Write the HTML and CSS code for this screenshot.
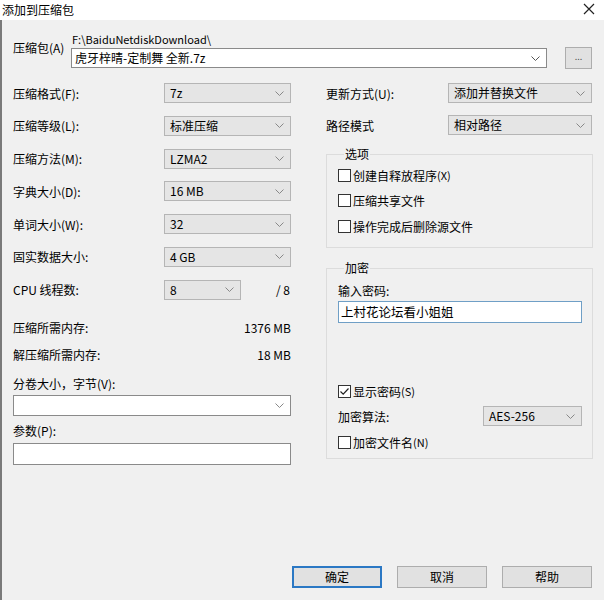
FILE: index.html
```html
<!DOCTYPE html>
<html lang="zh-CN">
<head>
<meta charset="utf-8">
<title>添加到压缩包</title>
<link rel="stylesheet" href="styles.css">
</head>
<body>
<div class="window">
  <div class="titlebar">
    <span class="title">添加到压缩包</span>
    <svg class="close" width="12" height="12" viewBox="0 0 12 12"><path d="M1 1L11 11M11 1L1 11" stroke="#222" stroke-width="1.2" fill="none"/></svg>
  </div>
  <div class="content">
    <div class="archive">
      <div class="archive-label">压缩包(A)</div>
      <div class="archive-main">
        <div class="path">F:\BaiduNetdiskDownload\</div>
        <div class="combo edit wide"><span>虎牙梓晴-定制舞 全新.7z</span><svg class="chev" width="9" height="5" viewBox="0 0 9 5"><path d="M0.5 0.5L4.5 4.5L8.5 0.5" stroke="#555" fill="none"/></svg></div>
      </div>
      <div class="browse">...</div>
    </div>

    <div class="columns">
      <div class="left">
        <div class="settings">
          <div class="lbl">压缩格式(F):</div>
          <div class="combo sel"><span>7z</span><svg class="chev" width="9" height="5" viewBox="0 0 9 5"><path d="M0.5 0.5L4.5 4.5L8.5 0.5" stroke="#888" fill="none"/></svg></div>
          <div class="lbl">压缩等级(L):</div>
          <div class="combo sel"><span>标准压缩</span><svg class="chev" width="9" height="5" viewBox="0 0 9 5"><path d="M0.5 0.5L4.5 4.5L8.5 0.5" stroke="#888" fill="none"/></svg></div>
          <div class="lbl">压缩方法(M):</div>
          <div class="combo sel"><span>LZMA2</span><svg class="chev" width="9" height="5" viewBox="0 0 9 5"><path d="M0.5 0.5L4.5 4.5L8.5 0.5" stroke="#888" fill="none"/></svg></div>
          <div class="lbl">字典大小(D):</div>
          <div class="combo sel"><span>16 MB</span><svg class="chev" width="9" height="5" viewBox="0 0 9 5"><path d="M0.5 0.5L4.5 4.5L8.5 0.5" stroke="#888" fill="none"/></svg></div>
          <div class="lbl">单词大小(W):</div>
          <div class="combo sel"><span>32</span><svg class="chev" width="9" height="5" viewBox="0 0 9 5"><path d="M0.5 0.5L4.5 4.5L8.5 0.5" stroke="#888" fill="none"/></svg></div>
          <div class="lbl">固实数据大小:</div>
          <div class="combo sel"><span>4 GB</span><svg class="chev" width="9" height="5" viewBox="0 0 9 5"><path d="M0.5 0.5L4.5 4.5L8.5 0.5" stroke="#888" fill="none"/></svg></div>
          <div class="lbl">CPU 线程数:</div>
          <div class="cpu">
            <div class="combo sel short"><span>8</span><svg class="chev" width="9" height="5" viewBox="0 0 9 5"><path d="M0.5 0.5L4.5 4.5L8.5 0.5" stroke="#888" fill="none"/></svg></div>
            <span class="of">/ 8</span>
          </div>
        </div>
        <div class="mem first"><span>压缩所需内存:</span><span>1376 MB</span></div>
        <div class="mem second"><span>解压缩所需内存:</span><span>18 MB</span></div>
        <div class="field-label vol">分卷大小，字节(V):</div>
        <div class="combo edit full"><span></span><svg class="chev" width="9" height="5" viewBox="0 0 9 5"><path d="M0.5 0.5L4.5 4.5L8.5 0.5" stroke="#888" fill="none"/></svg></div>
        <div class="field-label par">参数(P):</div>
        <div class="textbox"></div>
      </div>

      <div class="right">
        <div class="settings right-settings">
          <div class="lbl">更新方式(U):</div>
          <div class="combo sel"><span>添加并替换文件</span><svg class="chev" width="9" height="5" viewBox="0 0 9 5"><path d="M0.5 0.5L4.5 4.5L8.5 0.5" stroke="#888" fill="none"/></svg></div>
          <div class="lbl">路径模式</div>
          <div class="combo sel"><span>相对路径</span><svg class="chev" width="9" height="5" viewBox="0 0 9 5"><path d="M0.5 0.5L4.5 4.5L8.5 0.5" stroke="#888" fill="none"/></svg></div>
        </div>
        <fieldset class="group options">
          <legend>选项</legend>
          <label class="check"><span class="box"></span>创建自释放程序<small>(X)</small></label>
          <label class="check"><span class="box"></span>压缩共享文件</label>
          <label class="check"><span class="box"></span>操作完成后删除源文件</label>
        </fieldset>
        <fieldset class="group crypt">
          <legend>加密</legend>
          <div class="pw-label">输入密码:</div>
          <div class="pw">上村花论坛看小姐姐</div>
          <label class="check show"><span class="box"><svg width="11" height="11" viewBox="0 0 11 11"><path d="M1.5 5.5L4.2 8.2L9.5 2.5" stroke="#222" stroke-width="1.2" fill="none"/></svg></span>显示密码<small>(S)</small></label>
          <div class="algo">
            <span>加密算法:</span>
            <div class="combo sel algo-sel"><span>AES-256</span><svg class="chev" width="9" height="5" viewBox="0 0 9 5"><path d="M0.5 0.5L4.5 4.5L8.5 0.5" stroke="#888" fill="none"/></svg></div>
          </div>
          <label class="check"><span class="box"></span>加密文件名<small>(N)</small></label>
        </fieldset>
      </div>
    </div>

    <div class="buttons">
      <div class="btn default">确定</div>
      <div class="btn">取消</div>
      <div class="btn">帮助</div>
    </div>
  </div>
</div>
</body>
</html>
```

FILE: styles.css
```css
* { box-sizing: border-box; }
html, body { margin: 0; padding: 0; }
body {
  width: 604px;
  height: 600px;
  overflow: hidden;
  background: #f0f0f0;
  font-family: "Noto Sans CJK SC", "Noto Sans", sans-serif;
  font-size: 12px;
  color: #000;
}
.window {
  width: 604px;
  height: 600px;
  display: flex;
  flex-direction: column;
}
.titlebar {
  height: 20px;
  background: #fff;
  display: flex;
  align-items: center;
  justify-content: space-between;
  padding: 0 9px 0 2px;
  line-height: 20px;
}
.close { margin-top: -3px; }
.content {
  flex: 1;
  border-left: 2px solid #7a7a7a;
  padding: 11px 12px 12px 11px;
  display: flex;
  flex-direction: column;
}
.archive {
  display: grid;
  grid-template-columns: 58px 476px 27px;
  column-gap: 0;
  height: 37px;
  align-items: start;
}
.archive-label { margin-top: 10px; line-height: 14px; }
.archive-main { display: flex; flex-direction: column; gap: 1px; }
.path { height: 16px; line-height: 16px; font-size: 11px; padding-left: 1px; }
.browse {
  margin-left: 18px;
  width: 27px;
  height: 22px;
  margin-top: 16px;
  background: #e1e1e1;
  border: 1px solid #adadad;
  text-align: center;
  line-height: 18px;
  font-size: 9px;
  color: #555;
}
.combo {
  height: 20px;
  display: flex;
  align-items: center;
  justify-content: space-between;
  padding: 0 6px 0 5px;
  line-height: 18px;
}
.combo.sel { background: #e5e5e5; border: 1px solid #b5b5b5; }
.combo.edit { background: #fff; border: 1px solid #8a8a8a; padding-left: 3px; }
.combo.full { height: 21px; }
.chev { flex: none; }

.columns {
  display: grid;
  grid-template-columns: 278px 267px;
  column-gap: 35px;
  margin-top: 15px;
}
.settings {
  display: grid;
  grid-template-columns: 151px 127px;
  grid-auto-rows: 20px;
  row-gap: 12.8px;
  align-items: center;
}
.cpu { display: flex; align-items: center; justify-content: space-between; }
.combo.short { width: 77px; }
.of { padding-right: 1px; }
.mem { display: flex; justify-content: space-between; line-height: 14px; }
.mem.first { margin-top: 21px; }
.mem.second { margin-top: 13px; }
.field-label { line-height: 14px; }
.field-label.vol { margin-top: 15px; margin-bottom: 4px; }
.field-label.par { margin-top: 8px; margin-bottom: 5px; }
.textbox { height: 22px; background: #fff; border: 1px solid #8a8a8a; }

.right-settings {
  grid-template-columns: 122px 144px;
  row-gap: 12px;
}
.group {
  margin: 0;
  border: 1px solid #dcdcdc;
  padding: 0 10px 0 11px;
  min-width: 0;
}
.group legend {
  padding: 0 1px;
  margin-left: 6px;
  line-height: 14px;
}
.options { margin-top: 12px; padding-top: 5px; padding-bottom: 12px; }
.check { display: flex; align-items: center; height: 18px; }
.options .check + .check { margin-top: 7.5px; }
.check small { font-size: 11px; }
.box {
  width: 13px;
  height: 13px;
  border: 1px solid #333;
  background: #fff;
  margin-right: 2px;
  display: flex;
  align-items: center;
  justify-content: center;
  flex: none;
}
.crypt { margin-top: 13px; padding-top: 10px; padding-bottom: 7px; }
.pw-label { line-height: 14px; margin-top: -1px; }
.pw {
  margin-top: 3px;
  height: 22px;
  background: #fff;
  border: 1px solid #6f9fc6;
  line-height: 20px;
  padding-left: 2px;
  font-size: 12.5px;
}
.check.show { margin-top: 59px; }
.algo { display: flex; align-items: center; justify-content: space-between; margin-top: 6px; }
.algo-sel { width: 99px; }
.crypt .check:last-child { margin-top: 7px; }

.buttons {
  margin-top: auto;
  display: flex;
  justify-content: flex-end;
  gap: 15px;
}
.btn {
  width: 90px;
  height: 22px;
  background: #e1e1e1;
  border: 1px solid #adadad;
  text-align: center;
  line-height: 20px;
}
.btn.default { border: 2px solid #2b78c4; line-height: 18px; }
```
